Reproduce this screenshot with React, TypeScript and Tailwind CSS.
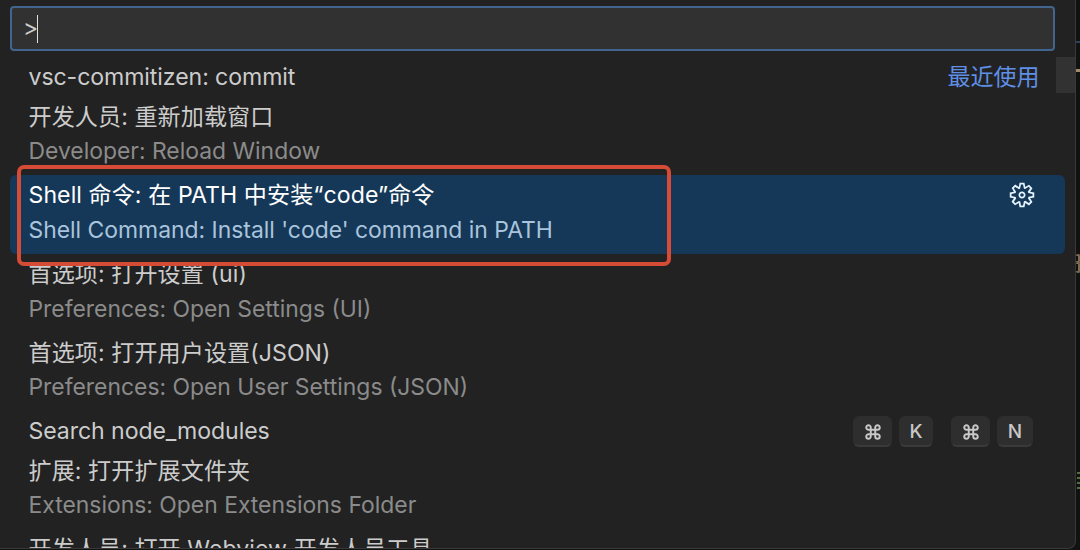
import { clsx } from 'clsx';
import { LuCommand } from 'react-icons/lu';

type Command = {
  label: string;
  detail?: string;
  badge?: string;
  keys?: string[][];
  selected?: boolean;
};

const commands: Command[] = [
  { label: 'vsc-commitizen: commit', badge: '最近使用' },
  { label: '开发人员: 重新加载窗口', detail: 'Developer: Reload Window' },
  {
    label: 'Shell 命令: 在 PATH 中安装“code”命令',
    detail: "Shell Command: Install 'code' command in PATH",
    selected: true,
  },
  { label: '首选项: 打开设置 (ui)', detail: 'Preferences: Open Settings (UI)' },
  { label: '首选项: 打开用户设置(JSON)', detail: 'Preferences: Open User Settings (JSON)' },
  {
    label: 'Search node_modules',
    keys: [
      ['⌘', 'K'],
      ['⌘', 'N'],
    ],
  },
  { label: '扩展: 打开扩展文件夹', detail: 'Extensions: Open Extensions Folder' },
  { label: '开发人员: 打开 Webview 开发人员工具', detail: 'Developer: Open Webview Developer Tools' },
];

const keyWidths: Record<string, string> = {
  '⌘': 'w-[39px]',
  K: 'w-[34px]',
  N: 'w-[36px]',
};

function GearIcon({ className }: { className?: string }) {
  return (
    <svg viewBox="0 0 16 16" fill="currentColor" className={className}>
      <path
        fillRule="evenodd"
        clipRule="evenodd"
        d="M9.1 4.4L8.6 2H7.4l-.5 2.4-.7.3-2-1.3-.9.8 1.3 2-.2.7-2.4.5v1.2l2.4.5.3.8-1.3 2 .8.8 2-1.3.8.3.4 2.3h1.2l.5-2.4.8-.3 2 1.3.8-.8-1.3-2 .3-.8 2.3-.4V7.4l-2.4-.5-.3-.8 1.3-2-.8-.8-2 1.3-.7-.2zM9.4 1l.5 2.4L12 2.1l2 2-1.4 2.1 2.4.4v2.8l-2.4.5L14 12l-2 2-2.1-1.4-.5 2.4H6.6l-.5-2.4L4 13.9l-2-2 1.4-2.1L1 9.4V6.6l2.4-.5L2.1 4l2-2 2.1 1.4.4-2.4h2.8zm.6 7c0 1.1-.9 2-2 2s-2-.9-2-2 .9-2 2-2 2 .9 2 2zM8 9c.6 0 1-.4 1-1s-.4-1-1-1-1 .4-1 1 .4 1 1 1z"
      />
    </svg>
  );
}

function Keycap({ value }: { value: string }) {
  return (
    <kbd
      className={clsx(
        'flex h-[31px] items-center justify-center rounded-[6px] border border-b-2 border-[#2e2e2e] border-b-[#3a3a3a] bg-[#2e2e2e] pt-[2px] font-["Inter",sans-serif] text-[19px] font-medium text-[#c8c8c8]',
        keyWidths[value]
      )}
    >
      {value === '⌘' ? <LuCommand className="h-[18px] w-[18px]" strokeWidth={2.6} /> : value}
    </kbd>
  );
}

function CommandRow({ command }: { command: Command }) {
  const { label, detail, badge, keys, selected } = command;

  return (
    <li
      className={clsx(
        'flex shrink-0 justify-between rounded-[6px] pl-[18.5px]',
        detail ? 'h-[78.7px]' : 'h-[39.2px]',
        selected && 'bg-[#163858]'
      )}
    >
      <div className={clsx('flex flex-col whitespace-nowrap', detail ? 'pt-[3.6px]' : 'pt-[3px]')}>
        <span
          className={clsx(
            'h-[34.5px] text-[23.1px] leading-[35px]',
            selected ? 'text-white' : 'text-[#cccccc]',
            detail ? 'tracking-[0.07px]' : 'tracking-[-0.08px]'
          )}
        >
          {label}
        </span>
        {detail && (
          <span
            className={clsx(
              'h-[35px] text-[22.9px] leading-[35px]',
              selected ? 'text-[#a9c4dc]' : 'text-[#8b8b8b]'
            )}
          >
            {detail}
          </span>
        )}
      </div>

      {badge && <span className="pr-[25.5px] pt-[3px] text-[23px] leading-[35px] text-[#5f8fe6]">{badge}</span>}
      {selected && <GearIcon className="mr-[29px] mt-[6px] h-[28px] w-[28px] text-[#e4f4ff]" />}
      {keys && (
        <div className="flex gap-[18px] pr-[32px] pt-[5px]">
          {keys.map((chord) => (
            <div key={chord.join('')} className="flex gap-[7px]">
              {chord.map((value) => (
                <Keycap key={value} value={value} />
              ))}
            </div>
          ))}
        </div>
      )}
    </li>
  );
}

export default function App() {
  return (
    <div className='relative flex h-[550px] w-[1080px] overflow-hidden bg-[#121212] font-["Inter","Noto_Sans_CJK_SC",sans-serif]'>
      <div className="flex h-[549px] w-[1076px] flex-col overflow-hidden rounded-br-[8px] border-b border-r border-[#393939] bg-[#222222] pl-[10px] pt-[6px]">
        <div className="flex h-[45px] w-[1045px] shrink-0 items-center rounded-[4px] border-2 border-[#41658f] bg-[#313131] pl-[11px] text-[23px] text-[#cccccc]">
          <span className="w-[14px]">&gt;</span>
          <span className="h-[28px] w-px bg-[#e0e0e0]" />
        </div>

        <div className="flex min-h-0 flex-1 pt-[6px]">
          <ul className="flex w-[1055px] shrink-0 flex-col">
            {commands.map((command) => (
              <CommandRow key={command.label} command={command} />
            ))}
          </ul>
          {/* the scrollbar thumb overlaps the end of the rows */}
          <div className="-ml-[9px] h-[36px] w-[19px] shrink-0 bg-[#323232]" />
        </div>
      </div>

      {/* slivers of the editor behind the palette */}
      <div className="absolute right-0 top-[41px] h-[2px] w-[4px] bg-[#29435e]" />
      <div className="absolute right-0 top-[69px] h-[3px] w-[4px] bg-[#a08a6c]" />
      <div className="absolute right-0 top-[254px] h-[9px] w-[4px] rounded-full border-2 border-l-0 border-[#7d6c52]" />
      <div className="absolute right-0 top-[262px] h-[11px] w-[4px] rounded-full border-2 border-l-0 border-[#7d6c52]" />
      <div className="absolute right-0 top-[472px] flex w-[3px] flex-col gap-[3px]">
        <div className="h-[2px] bg-[#50703f]" />
        <div className="h-[2px] bg-[#50703f]" />
        <div className="h-[2px] bg-[#50703f]" />
        <div className="h-[2px] bg-[#50703f]" />
      </div>

      <div className="absolute left-[17px] top-[165px] h-[101px] w-[654px] rounded-[7px] border-[4px] border-[#d64b35]" />
    </div>
  );
}
